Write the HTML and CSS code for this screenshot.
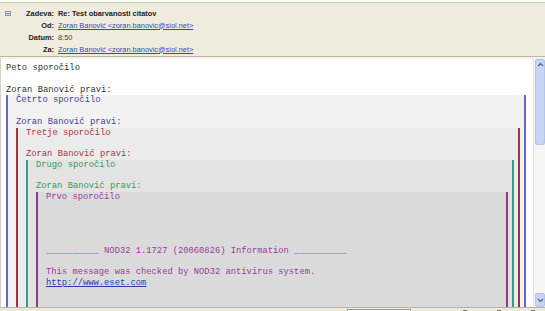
FILE: index.html
```html
<!DOCTYPE html>
<html lang="sl">
<head>
  <meta charset="UTF-8" />
  <title>Re: Test obarvanosti citatov</title>
  <link rel="stylesheet" href="styles.css">
</head>
<body>
  <div class="topline"></div>
  <header class="headers">
    <span class="twisty">
      <svg width="6" height="5" viewBox="0 0 6 5"><rect x="0.5" y="0.5" width="5" height="4" fill="#e4e6ee" stroke="#8d93a6"/><line x1="1.5" y1="2.5" x2="4.5" y2="2.5" stroke="#6d7388"/></svg>
    </span>
    <span class="label">Zadeva:</span>
    <span class="value subject">Re: Test obarvanosti citatov</span>

    <span></span>
    <span class="label">Od:</span>
    <a class="value link" href="#">Zoran Banović &lt;zoran.banovic@siol.net&gt;</a>

    <span></span>
    <span class="label">Datum:</span>
    <span class="value plain">8:50</span>

    <span></span>
    <span class="label">Za:</span>
    <a class="value link" href="#">Zoran Banović &lt;zoran.banovic@siol.net&gt;</a>
  </header>

  <div class="message">
    <div class="body">
      <div class="line">Peto sporočilo</div>
      <div class="line"></div>
      <div class="line">Zoran Banović pravi:</div>

      <!-- level 1 -->
      <div class="quote blue">
        <div class="line">Četrto sporočilo</div>
        <div class="line"></div>
        <div class="line">Zoran Banović pravi:</div>

        <!-- level 2 -->
        <div class="quote red">
          <div class="line">Tretje sporočilo</div>
          <div class="line"></div>
          <div class="line">Zoran Banović pravi:</div>

          <!-- level 3 -->
          <div class="quote green">
            <div class="line">Drugo sporočilo</div>
            <div class="line"></div>
            <div class="line">Zoran Banović pravi:</div>

            <!-- level 4 -->
            <div class="quote purple">
              <div class="line">Prvo sporočilo</div>
              <div class="line"></div>
              <div class="line"></div>
              <div class="line"></div>
              <div class="line"></div>
              <div class="line">__________ NOD32 1.1727 (20060826) Information __________</div>
              <div class="line"></div>
              <div class="line">This message was checked by NOD32 antivirus system.</div>
              <div class="line"><a class="link" href="#">http://www.eset.com</a></div>
              <div class="line"></div>
              <div class="line"></div>
              <div class="line"></div>
            </div>
          </div>
        </div>
      </div>
    </div>

    <div class="scrollbar">
      <div class="thumb">
        <svg width="7" height="5" viewBox="0 0 7 5"><path d="M1 4 L3.5 1.5 L6 4" fill="none" stroke="#4d6185" stroke-width="1.2"/></svg>
      </div>
      <div class="track"></div>
      <div class="arrow-btn">
        <svg width="7" height="5" viewBox="0 0 7 5"><path d="M1 1 L3.5 3.5 L6 1" fill="none" stroke="#4d6185" stroke-width="1.2"/></svg>
      </div>
    </div>
  </div>

  <footer class="statusbar">
    <span class="status-box"></span>
    <span class="status-icons">
      <span class="dot"></span><span class="dot"></span><span class="dot"></span>
    </span>
  </footer>
</body>
</html>
```

FILE: styles.css
```css
body {
  margin: 0;
  width: 545px;
  height: 311px;
  overflow: hidden;
  background: #ffffff;
}
.topline {
  height: 2px;
  background: #fbfbf8;
  border-bottom: 1px solid #c6c4b8;
}
.headers {
  display: grid;
  grid-template-columns: 10px 38px auto;
  grid-auto-rows: 12px;
  column-gap: 4px;
  align-items: center;
  padding: 4px 0 1px 2px;
  height: 48px;
  background: #efecdd;
  border-bottom: 1px solid #b9b6a6;
  font-family: "Liberation Sans", Arial, sans-serif;
  font-size: 7.4px;
  color: #222;
}
.twisty {
  display: flex;
  align-items: center;
  padding-left: 3px;
}
.label {
  text-align: right;
  font-weight: bold;
}
.value {
  white-space: nowrap;
}
.subject {
  font-weight: bold;
}
.plain {
  color: #444;
}
.link {
  color: #3048c8;
  text-decoration: underline;
}
.message {
  display: flex;
  height: 248px;
  border-top: 2px solid #f4f2ea;
  border-left: 1px solid #d4d2c8;
}
.body {
  flex: 1;
  overflow: hidden;
  padding: 4px 7px 0 5px;
  font-family: "Liberation Mono", "Courier New", monospace;
  font-size: 8.8px;
  color: #333;
}
.line {
  height: 10.75px;
  line-height: 10.75px;
  white-space: pre;
}
.quote {
  border-left: 2px solid;
  border-right: 2px solid;
  padding: 0 4px 0 8px;
}
.quote.blue {
  border-color: #6666cc;
  background: #f2f2f2;
  color: #42429a;
}
.quote.red {
  border-color: #993838;
  background: #ebebeb;
  color: #a03c3c;
}
.quote.green {
  border-color: #3a9a88;
  background: #e3e3e3;
  color: #389a58;
}
.quote.purple {
  border-color: #8c3a8c;
  background: #dadada;
  color: #9a3a9a;
}
.quote.purple .link {
  color: #2838b8;
}
.scrollbar {
  width: 11px;
  display: flex;
  flex-direction: column;
  background: #f5f5f2;
  border-left: 1px solid #e4e4de;
}
.thumb {
  height: 86px;
  margin-left: 1px;
  background: #c6d5f6;
  border: 1px solid #b2c4ea;
  border-radius: 2px;
  display: flex;
  justify-content: center;
  padding-top: 2px;
  box-sizing: border-box;
}
.track {
  flex: 1;
}
.arrow-btn {
  height: 12px;
  margin-left: 1px;
  background: #c6d5f6;
  border: 1px solid #b2c4ea;
  border-radius: 2px;
  display: flex;
  align-items: center;
  justify-content: center;
}
.statusbar {
  display: flex;
  align-items: flex-start;
  height: 10px;
  background: #ece9d8;
  border-top: 1px solid #b8b5a6;
  padding-left: 347px;
  gap: 12px;
}
.status-box {
  width: 62px;
  height: 8px;
  margin-top: 1px;
  background: #fff;
  border: 1px solid #9a9a90;
}
.status-icons {
  display: flex;
  gap: 30px;
  margin-top: 2px;
  padding-left: 40px;
}
.dot {
  width: 4px;
  height: 3px;
  background: #7a7868;
}
```
